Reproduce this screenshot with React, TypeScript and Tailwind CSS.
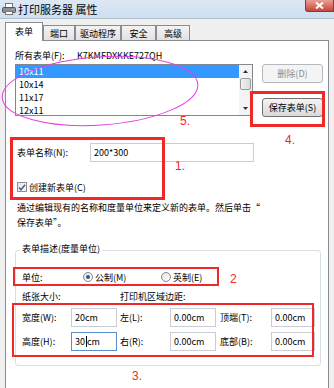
import React from 'react';

const CJK = "font-['Noto_Sans_CJK_SC','Microsoft_YaHei',sans-serif]";

function Tab({ label, className, active }: { label: string; className: string; active?: boolean }) {
  return (
    <div
      className={`flex items-center justify-center border border-b-0 border-[#898c95] ${
        active
          ? 'relative z-10 -mb-px h-[19px] bg-white pb-[2px]'
          : 'h-[15px] bg-gradient-to-b from-[#f3f3f3] to-[#e2e2e2]'
      } ${className}`}
    >
      {label}
    </div>
  );
}

function TextBox({ value, className, focused }: { value: string; className: string; focused?: boolean }) {
  return (
    <div
      className={`flex h-[19px] items-center border bg-white pl-[3px] ${
        focused ? 'border-[#5b8fc7]' : 'border-[#c9ccd3]'
      } ${className}`}
    >
      {focused ? (
        <>
          <span>30</span>
          <span className="mx-[0.5px] h-[11px] w-px bg-black" />
          <span>cm</span>
        </>
      ) : (
        value
      )}
    </div>
  );
}

function Radio({ checked }: { checked?: boolean }) {
  return (
    <div className="flex h-[10px] w-[10px] items-center justify-center rounded-full border border-[#8a8a8a] bg-gradient-to-br from-[#e4e4e4] to-[#fdfdfd]">
      {checked && <div className="h-[4px] w-[4px] rounded-full bg-[#1f5f9e]" />}
    </div>
  );
}

export default function App() {
  return (
    <div className={`relative h-[388px] w-[334px] overflow-hidden bg-[#f0f0f0] text-[9px] leading-none text-black ${CJK}`}>
      {/* title bar */}
      <div className="flex h-[19px] items-start border-b border-[#b4c0cc] bg-gradient-to-b from-[#dde8f4] to-[#cddff1]">
        <svg width="14" height="12" viewBox="0 0 14 12" className="ml-[2px] mt-[3px]">
          <rect x="3.5" y="0.5" width="7" height="4" fill="#fff" stroke="#777" />
          <rect x="0.5" y="4.5" width="13" height="5" rx="1" fill="#8b8f96" stroke="#55595f" />
          <rect x="3.5" y="8.5" width="7" height="3" fill="#fff" stroke="#777" />
          <rect x="10" y="6" width="2" height="1" fill="#7cd36b" />
        </svg>
        <span className="ml-[2px] mt-[3px] text-[11px] leading-[12px]">打印服务器 属性</span>
        <div className="ml-auto flex h-[12px] w-[29px] items-center justify-center rounded-bl-[3px] border border-t-0 border-[#8a3b33] bg-gradient-to-b from-[#e8a093] to-[#c5443a]">
          <svg width="9" height="7" viewBox="0 0 9 7">
            <path d="M1 0.5 L8 6.5 M8 0.5 L1 6.5" stroke="#fff" strokeWidth="2" />
          </svg>
        </div>
      </div>

      {/* tabs */}
      <div className="flex h-[21px] items-end pl-[5px]">
        <Tab label="表单" className="w-[38px]" active />
        <Tab label="端口" className="w-[32px]" />
        <Tab label="驱动程序" className="w-[46px]" />
        <Tab label="安全" className="w-[35px]" />
        <Tab label="高级" className="w-[34px]" />
      </div>

      {/* panel */}
      <div className="ml-[5px] flex h-[360px] w-[324px] flex-col border border-[#898c95] bg-white pl-[9px]">
        <div className="mt-[8px] flex h-[12px] items-center">
          <span className="w-[62px]">所有表单(F):</span>
          <span>K7KMFDXKKE727QH</span>
        </div>

        <div className="mt-[3px] flex">
          <div className="flex h-[52px] w-[238px] border border-[#828790] bg-white">
            <div className="flex w-[223px] flex-col overflow-hidden">
              <div className="flex h-[13px] shrink-0 items-center bg-[#3399ff] pl-[3px] text-white">10x11</div>
              <div className="flex h-[13px] shrink-0 items-center pl-[3px]">10x14</div>
              <div className="flex h-[13px] shrink-0 items-center pl-[3px]">11x17</div>
              <div className="flex h-[13px] shrink-0 items-center pl-[3px]">12x11</div>
            </div>
            <div className="flex w-[13px] flex-col bg-[#f3f3f3]">
              <div className="flex h-[13px] items-center justify-center">
                <svg width="5" height="3" viewBox="0 0 5 3"><path d="M0 3 L2.5 0 L5 3 Z" fill="#333" /></svg>
              </div>
              <div className="mx-[1px] h-[12px] rounded-[2px] border border-[#9b9b9b] bg-gradient-to-r from-[#f2f2f2] to-[#dcdcdc]" />
              <div className="flex-1" />
              <div className="flex h-[13px] items-center justify-center">
                <svg width="5" height="3" viewBox="0 0 5 3"><path d="M0 0 L2.5 3 L5 0 Z" fill="#333" /></svg>
              </div>
            </div>
          </div>
          <div className="ml-[9px] flex w-[61px] flex-col">
            <div className="flex h-[19px] items-center justify-center rounded-[3px] border border-[#b5b9bd] bg-[#f4f4f4] text-[#8d8d8d]">
              删除(D)
            </div>
            <div className="mt-[15px] flex h-[19px] items-center justify-center rounded-[3px] border border-[#707070] bg-gradient-to-b from-[#f4f4f4] to-[#d9d9d9]">
              保存表单(S)
            </div>
          </div>
        </div>

        <div className="mt-[26px] flex h-[19px] items-center">
          <span className="ml-[2px] w-[73px]">表单名称(N):</span>
          <TextBox value="200*300" className="w-[164px]" />
        </div>

        <div className="mt-[20px] flex h-[10px] items-center">
          <div className="ml-[2px] flex h-[10px] w-[10px] items-center justify-center border border-[#8e8f8f] bg-gradient-to-br from-[#e6e6e6] to-[#ffffff]">
            <svg width="8" height="7" viewBox="0 0 8 7">
              <path d="M1 3.5 L3 5.8 L7 0.8" fill="none" stroke="#4b5d8f" strokeWidth="1.5" />
            </svg>
          </div>
          <span className="ml-[2px]">创建新表单(C)</span>
        </div>

        <p className="mt-[8px] whitespace-nowrap pl-[2px] leading-[15px]">
          通过编辑现有的名称和度量单位来定义新的表单。然后单击“
          <br />
          保存表单”。
        </p>

        {/* group box */}
        <div className="mt-[20px] flex w-[306px] flex-col rounded-[3px] border border-[#d5dfe5] pb-[14px] pl-[6px]">
          <div className="-mt-[9px] ml-[-2px] flex h-[12px] w-fit items-center bg-white px-[2px]">表单描述(度量单位)</div>

          <div className="mt-[17px] flex h-[12px] items-center">
            <span className="w-[61px]">单位:</span>
            <div className="flex w-[78px] items-center">
              <Radio checked />
              <span className="ml-[2px]">公制(M)</span>
            </div>
            <Radio />
            <span className="ml-[2px]">英制(E)</span>
          </div>

          <div className="mt-[7px] flex h-[12px] items-center">
            <span className="w-[98px]">纸张大小:</span>
            <span>打印机区域边距:</span>
          </div>

          <div className="mt-[6px] flex items-center">
            <span className="w-[49px]">宽度(W):</span>
            <TextBox value="20cm" className="w-[46px]" />
            <span className="ml-[3px] w-[50px]">左(L):</span>
            <TextBox value="0.00cm" className="w-[46px]" />
            <span className="ml-[4px] w-[51px]">顶端(T):</span>
            <TextBox value="0.00cm" className="w-[44px]" />
          </div>

          <div className="mt-[5px] flex items-center">
            <span className="w-[49px]">高度(H):</span>
            <TextBox value="30cm" className="w-[46px]" focused />
            <span className="ml-[3px] w-[50px]">右(R):</span>
            <TextBox value="0.00cm" className="w-[46px]" />
            <span className="ml-[4px] w-[51px]">底部(B):</span>
            <TextBox value="0.00cm" className="w-[44px]" />
          </div>
        </div>
      </div>

      {/* annotations */}
      <svg className="pointer-events-none absolute left-0 top-0" width="334" height="388" viewBox="0 0 334 388">
        <ellipse cx="100" cy="91" rx="98" ry="34" fill="none" stroke="#e040e0" strokeWidth="1" transform="rotate(-4 100 91)" />
        <rect x="11.5" y="138.5" width="152" height="60" fill="none" stroke="#f02828" strokeWidth="3" />
        <rect x="251.5" y="92.5" width="72" height="33" fill="none" stroke="#f02828" strokeWidth="3" />
        <rect x="14" y="268" width="204" height="17" fill="none" stroke="#f02828" strokeWidth="2" />
        <rect x="13" y="304" width="300" height="52" fill="none" stroke="#f02828" strokeWidth="2" />
      </svg>
      <div className="absolute left-[180px] top-[115px] font-['Liberation_Sans',sans-serif] text-[12px] text-[#f02828]">5.</div>
      <div className="absolute left-[285px] top-[134px] font-['Liberation_Sans',sans-serif] text-[12px] text-[#f02828]">4.</div>
      <div className="absolute left-[175px] top-[160px] font-['Liberation_Sans',sans-serif] text-[12px] text-[#f02828]">1.</div>
      <div className="absolute left-[230px] top-[273px] font-['Liberation_Sans',sans-serif] text-[12px] text-[#f02828]">2</div>
      <div className="absolute left-[132px] top-[370px] font-['Liberation_Sans',sans-serif] text-[12px] text-[#f02828]">3.</div>
    </div>
  );
}
